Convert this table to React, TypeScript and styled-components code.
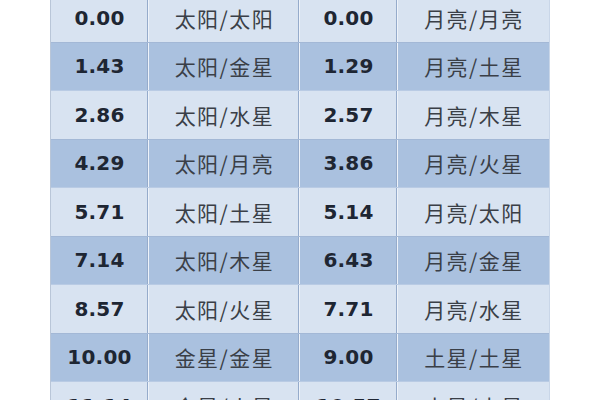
import React from "react";
import styled, { createGlobalStyle } from "styled-components";

const Global = createGlobalStyle`
  html, body { margin: 0; padding: 0; background: #ffffff; overflow: hidden; }
  body { width: 600px; height: 400px; }
`;

const Page = styled.div`
  width: 600px;
  height: 400px;
  overflow: hidden;
  display: flex;
  justify-content: center;
  align-items: flex-start;
`;

const Table = styled.div`
  width: 500px;
  margin-top: -6px;
  display: flex;
  flex-direction: column;
  border-left: 1px solid #b9c6d8;
  border-right: 1px solid #c9d6e8;
  box-sizing: border-box;
`;

const Row = styled.div<{ $dark: boolean }>`
  display: grid;
  grid-template-columns: 98px 151px 98px 1fr;
  height: 48.5px;
  box-sizing: border-box;
  background: ${(p) => (p.$dark ? "#aac1df" : "#d8e3f1")};
  border-bottom: 1px solid ${(p) => (p.$dark ? "#b9cbe4" : "#a3b8d6")};
`;

const Cell = styled.div<{ $num?: boolean }>`
  display: flex;
  align-items: center;
  justify-content: center;
  box-sizing: border-box;
  border-right: 1px solid #eef3fa;
  box-shadow: inset -2px 0 0 -1px #95abcb;
  &:last-child { border-right: none; box-shadow: none; }
  font-family: ${(p) =>
    p.$num
      ? `"DejaVu Sans", "Noto Sans", sans-serif`
      : `"Noto Sans CJK SC", "Noto Sans", sans-serif`};
  font-size: ${(p) => (p.$num ? "20px" : "21px")};
  font-weight: ${(p) => (p.$num ? 700 : 400)};
  letter-spacing: ${(p) => (p.$num ? "0.2px" : "1.5px")};
  color: ${(p) => (p.$num ? "#1e2633" : "#3a3f47")};
  padding-left: ${(p) => (p.$num ? "0" : "1px")};
`;

const rows: [string, string, string, string][] = [
  ["0.00", "太阳/太阳", "0.00", "月亮/月亮"],
  ["1.43", "太阳/金星", "1.29", "月亮/土星"],
  ["2.86", "太阳/水星", "2.57", "月亮/木星"],
  ["4.29", "太阳/月亮", "3.86", "月亮/火星"],
  ["5.71", "太阳/土星", "5.14", "月亮/太阳"],
  ["7.14", "太阳/木星", "6.43", "月亮/金星"],
  ["8.57", "太阳/火星", "7.71", "月亮/水星"],
  ["10.00", "金星/金星", "9.00", "土星/土星"],
  ["11.14", "金星/火星", "10.57", "土星/木星"],
];

export default function App() {
  return (
    <>
      <Global />
      <Page>
        <Table>
          {rows.map((r, i) => (
            <Row key={i} $dark={i % 2 === 1}>
              <Cell $num>{r[0]}</Cell>
              <Cell>{r[1]}</Cell>
              <Cell $num>{r[2]}</Cell>
              <Cell>{r[3]}</Cell>
            </Row>
          ))}
        </Table>
      </Page>
    </>
  );
}
